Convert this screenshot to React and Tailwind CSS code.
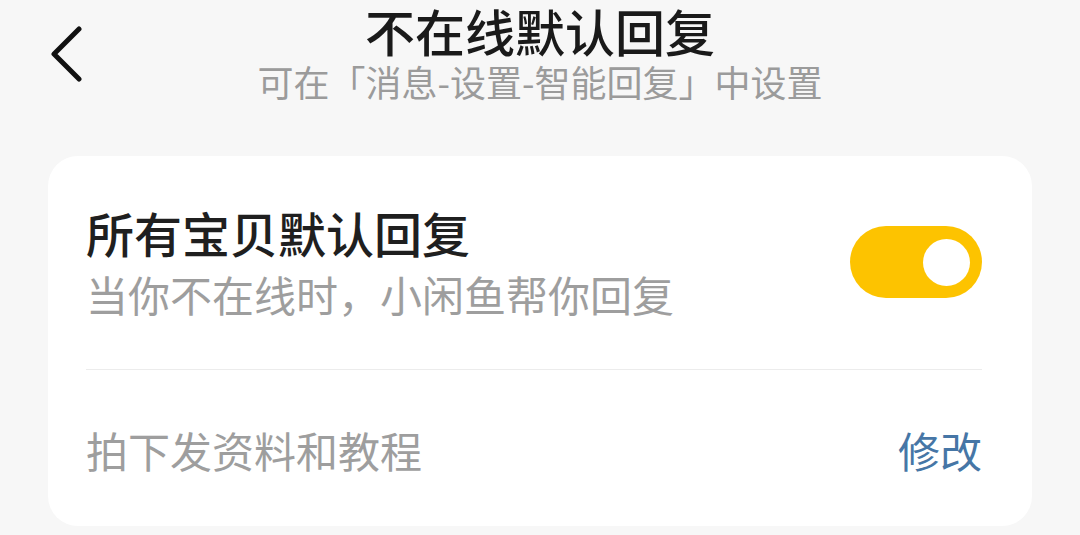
import React, { useState } from 'react';

// ===========================================
// Toggle
// ===========================================
function Toggle({ on, onChange }) {
  return (
    <button
      type="button"
      onClick={() => onChange(!on)}
      className={`flex h-[72px] w-[132px] shrink-0 items-center rounded-full px-[12px] ${
        on ? 'justify-end bg-[#fdc300]' : 'justify-start bg-[#e5e5e5]'
      }`}
    >
      <span className="block h-[47px] w-[47px] rounded-full bg-white" />
    </button>
  );
}

// ===========================================
// App
// ===========================================
export default function App() {
  const [enabled, setEnabled] = useState(true);

  return (
    <div
      className="min-h-[535px] w-full bg-[#f7f7f7] pt-[1px]"
      style={{ fontFamily: '"Noto Sans CJK SC", "Noto Sans", sans-serif' }}
    >
      {/* Header */}
      <div className="grid grid-cols-[1fr_auto_1fr]">
        <div className="pl-[50px] pt-[25px]">
          <svg width="34" height="56" viewBox="0 0 34 56" fill="none">
            <path
              d="M29 3 L4 28 L29 53"
              stroke="#111"
              strokeWidth="5"
              strokeLinecap="round"
              strokeLinejoin="round"
            />
          </svg>
        </div>
        <div className="flex flex-col items-center">
          <h1 className="text-[50px] leading-[58px] font-medium text-[#1a1a1a]">不在线默认回复</h1>
          <p className="text-[36px] leading-[44px] text-[#9b9b9b]">
            可在「消息-设置-智能回复」中设置
          </p>
        </div>
        <div />
      </div>

      {/* Card */}
      <div className="mx-[48px] mt-[53px] rounded-[30px] bg-white pl-[38px] pr-[50px]">
        <div className="flex items-center justify-between pt-[50px] pb-[51px]">
          <div>
            <div className="text-[48px] leading-[52px] font-medium text-[#1f1f1f]">所有宝贝默认回复</div>
            <div className="mt-[12px] text-[42px] leading-[48px] text-[#9e9e9e]">
              当你不在线时，小闲鱼帮你回复
            </div>
          </div>
          <Toggle on={enabled} onChange={setEnabled} />
        </div>

        <div className="h-px bg-[#ececec]" />

        <div className="flex items-center justify-between pt-[56px] pb-[52px]">
          <span className="text-[42px] leading-[48px] text-[#9e9e9e]">拍下发资料和教程</span>
          <span className="text-[42px] leading-[48px] text-[#4676a6]">修改</span>
        </div>
      </div>
    </div>
  );
}
